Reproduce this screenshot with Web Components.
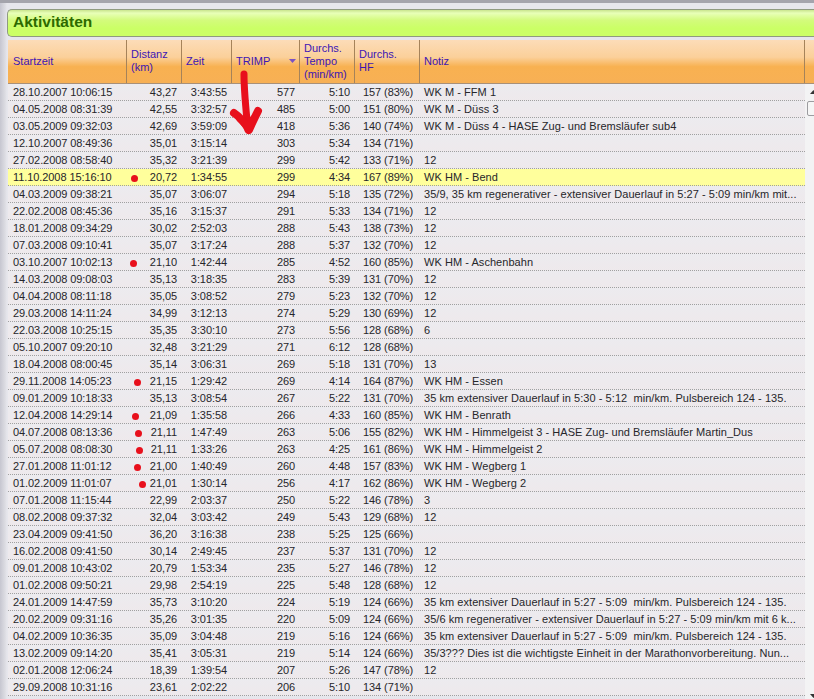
<!DOCTYPE html>
<html lang="de">
<head>
<meta charset="utf-8">
<title>Aktivitäten</title>
<style>
  html, body { margin: 0; height: 699px; overflow: hidden; background: #e6e6ec; }
  body { font-family: "Liberation Sans", Arial, sans-serif; }
</style>
</head>
<body>
<activity-page>
  <title-bar>Aktivitäten</title-bar>
  <activity-table></activity-table>
  <red-arrow></red-arrow>
</activity-page>

<script>
const COLUMNS = "119px 55px 50px 68px 55px 65px 385px 9px";

const ACTIVITIES = [
  ["28.10.2007 10:06:15", "43,27", "3:43:55", "577", "5:10", "157 (83%)", "WK M - FFM 1"],
  ["04.05.2008 08:31:39", "42,55", "3:32:57", "485", "5:00", "151 (80%)", "WK M - Düss 3"],
  ["03.05.2009 09:32:03", "42,69", "3:59:09", "418", "5:36", "140 (74%)", "WK M - Düss 4 - HASE Zug- und Bremsläufer sub4"],
  ["12.10.2007 08:49:36", "35,01", "3:15:14", "303", "5:34", "134 (71%)", ""],
  ["27.02.2008 08:58:40", "35,32", "3:21:39", "299", "5:42", "133 (71%)", "12"],
  ["11.10.2008 15:16:10", "20,72", "1:34:55", "299", "4:34", "167 (89%)", "WK HM - Bend", 131, true],
  ["04.03.2009 09:38:21", "35,07", "3:06:07", "294", "5:18", "135 (72%)", "35/9, 35 km regenerativer - extensiver Dauerlauf in 5:27 - 5:09 min/km mit..."],
  ["22.02.2008 08:45:36", "35,16", "3:15:37", "291", "5:33", "134 (71%)", "12"],
  ["18.01.2008 09:34:29", "30,02", "2:52:03", "288", "5:43", "138 (73%)", "12"],
  ["07.03.2008 09:10:41", "35,07", "3:17:24", "288", "5:37", "132 (70%)", "12"],
  ["03.10.2007 10:02:13", "21,10", "1:42:44", "285", "4:52", "160 (85%)", "WK HM - Aschenbahn", 130],
  ["14.03.2008 09:08:03", "35,13", "3:18:35", "283", "5:39", "131 (70%)", "12"],
  ["04.04.2008 08:11:18", "35,05", "3:08:52", "279", "5:23", "132 (70%)", "12"],
  ["29.03.2008 14:11:24", "34,99", "3:12:13", "274", "5:29", "130 (69%)", "12"],
  ["22.03.2008 10:25:15", "35,35", "3:30:10", "273", "5:56", "128 (68%)", "6"],
  ["05.10.2007 09:20:10", "32,48", "3:21:29", "271", "6:12", "128 (68%)", ""],
  ["18.04.2008 08:00:45", "35,14", "3:06:31", "269", "5:18", "131 (70%)", "13"],
  ["29.11.2008 14:05:23", "21,15", "1:29:42", "269", "4:14", "164 (87%)", "WK HM - Essen", 134],
  ["09.01.2009 10:18:33", "35,13", "3:08:54", "267", "5:22", "131 (70%)", "35 km extensiver Dauerlauf in 5:30 - 5:12  min/km. Pulsbereich 124 - 135."],
  ["12.04.2008 14:29:14", "21,09", "1:35:58", "266", "4:33", "160 (85%)", "WK HM - Benrath", 132],
  ["04.07.2008 08:13:36", "21,11", "1:47:49", "263", "5:06", "155 (82%)", "WK HM - Himmelgeist 3 - HASE Zug- und Bremsläufer Martin_Dus", 135],
  ["05.07.2008 08:08:30", "21,11", "1:33:26", "263", "4:25", "161 (86%)", "WK HM - Himmelgeist 2", 136],
  ["27.01.2008 11:01:12", "21,00", "1:40:49", "260", "4:48", "157 (83%)", "WK HM - Wegberg 1", 134],
  ["01.02.2009 11:01:07", "21,01", "1:30:14", "256", "4:17", "162 (86%)", "WK HM - Wegberg 2", 139],
  ["07.01.2008 11:15:44", "22,99", "2:03:37", "250", "5:22", "146 (78%)", "3"],
  ["08.02.2008 09:37:32", "32,04", "3:03:42", "249", "5:43", "129 (68%)", "12"],
  ["23.04.2009 09:41:50", "36,20", "3:16:38", "238", "5:25", "125 (66%)", ""],
  ["16.02.2008 09:41:50", "30,14", "2:49:45", "237", "5:37", "131 (70%)", "12"],
  ["09.01.2008 10:43:02", "20,79", "1:53:34", "235", "5:27", "146 (78%)", "12"],
  ["01.02.2008 09:50:21", "29,98", "2:54:19", "225", "5:48", "128 (68%)", "12"],
  ["24.01.2009 14:47:59", "35,73", "3:10:20", "224", "5:19", "124 (66%)", "35 km extensiver Dauerlauf in 5:27 - 5:09  min/km. Pulsbereich 124 - 135."],
  ["20.02.2009 09:31:16", "35,26", "3:01:35", "220", "5:09", "124 (66%)", "35/6 km regenerativer - extensiver Dauerlauf in 5:27 - 5:09 min/km mit 6 k..."],
  ["04.02.2009 10:36:35", "35,09", "3:04:48", "219", "5:16", "124 (66%)", "35 km extensiver Dauerlauf in 5:27 - 5:09  min/km. Pulsbereich 124 - 135."],
  ["13.02.2009 09:14:20", "35,41", "3:05:31", "219", "5:14", "124 (66%)", "35/3??? Dies ist die wichtigste Einheit in der Marathonvorbereitung. Nun..."],
  ["02.01.2008 12:06:24", "18,39", "1:39:54", "207", "5:26", "147 (78%)", "12"],
  ["29.09.2008 10:31:16", "23,61", "2:02:22", "206", "5:10", "134 (71%)", ""],
];

class ActivityPage extends HTMLElement {
  constructor() {
    super();
    this.attachShadow({ mode: "open" });
    this.shadowRoot.innerHTML = `
      <style>
        :host {
          display: block;
          position: relative;
          box-sizing: border-box;
          height: 699px;
          overflow: hidden;
          padding: 6px 0 0 7px;
          border-top: 3px solid #a4a4ac;
          background: linear-gradient(90deg, #c6c6d0 0, #dcdce2 5px, #e6e6ec 7px);
        }
      </style>
      <slot></slot>
    `;
  }
}

class TitleBar extends HTMLElement {
  constructor() {
    super();
    this.attachShadow({ mode: "open" });
    this.shadowRoot.innerHTML = `
      <style>
        :host {
          display: flex;
          align-items: center;
          box-sizing: border-box;
          height: 28px;
          padding: 0 0 2px 5px;
          margin-bottom: 3px;
          border: 1px solid #8f9a80;
          border-right: none;
          border-radius: 5px 0 0 5px;
          background: linear-gradient(#c9e58e 0, #e8ffb8 12%, #d3fb7c 40%, #cbff66 70%, #ccff66 100%);
          color: #2c6a00;
          font: bold 15.5px "Liberation Sans", Arial, sans-serif;
        }
      </style>
      <slot></slot>
    `;
  }
}

class TableHead extends HTMLElement {
  constructor() {
    super();
    this.attachShadow({ mode: "open" });
    this.shadowRoot.innerHTML = `
      <style>
        :host {
          display: grid;
          grid-template-columns: ${COLUMNS};
          height: 44px;
          margin-left: 1px;
          font: 11px/13px "Liberation Sans", Arial, sans-serif;
          color: #3d16b4;
          background: linear-gradient(#fcdcb8 0, #fbd09a 40%, #f8b151 62%, #f7b055 100%);
          border-bottom: 1px solid #a89078;
          box-sizing: border-box;
        }
        div {
          display: flex;
          align-items: center;
          padding: 0 0 1px 4px;
          border-right: 1px solid #a5835a;
          box-sizing: border-box;
          white-space: pre-line;
        }
        .first { padding-left: 5px; }
        .sort { justify-content: space-between; padding-right: 3px; }
        .end { border-right: none; }
        svg { display: block; }
      </style>
      <div class="first">Startzeit</div>
      <div>Distanz
(km)</div>
      <div>Zeit</div>
      <div class="sort">TRIMP<svg width="7" height="4" viewBox="0 0 7 4"><path d="M0 0h7L3.5 4z" fill="#7a52c4"/></svg></div>
      <div>Durchs.
Tempo
(min/km)</div>
      <div>Durchs.
HF</div>
      <div>Notiz</div>
      <div class="end"></div>
    `;
  }
}

class ActivityRow extends HTMLElement {
  set data(values) {
    const [start, dist, time, trimp, tempo, hf, note, dotX, active] = values;
    this.toggleAttribute("active", !!active);
    // dotX: page x of the red marker, the distance column begins at x=127
    const dot = dotX ? `<i style="left:${dotX - 127}px"></i>` : "";
    this.shadowRoot.innerHTML = `
      <style>
        :host {
          display: grid;
          grid-template-columns: ${COLUMNS};
          height: 17px;
          box-sizing: border-box;
          margin-left: 1px;
          font: 11px/17px "Liberation Sans", Arial, sans-serif;
          letter-spacing: -0.08px;
          color: #26262a;
          background: linear-gradient(#ecebef, #eee9ec);
          border-bottom: 1px dotted #a0a0a0;
        }
        :host([active]) { background: #ffff9c; }
        span { padding: 0 5px; white-space: pre; overflow: hidden; position: relative; }
        .start { padding-left: 5px; }
        .num { text-align: right; }
        .hf { padding: 0 0 0 8px; }
        .note { grid-column: 7 / 9; padding: 0 0 0 4px; letter-spacing: 0.05px; }
        i {
          position: absolute;
          top: 6px;
          width: 7px;
          height: 7px;
          border-radius: 50%;
          background: #e8101c;
        }
      </style>
      <span class="start">${start}</span>
      <span class="num">${dot}${dist}</span>
      <span class="num">${time}</span>
      <span class="num">${trimp}</span>
      <span class="num">${tempo}</span>
      <span class="hf">${hf}</span>
      <span class="note">${note}</span>
    `;
  }

  constructor() {
    super();
    this.attachShadow({ mode: "open" });
  }
}

class ScrollTrack extends HTMLElement {
  constructor() {
    super();
    this.attachShadow({ mode: "open" });
    this.shadowRoot.innerHTML = `
      <style>
        :host {
          display: flex;
          flex-direction: column;
          box-sizing: border-box;
          width: 9px;
          height: 100%;
          padding: 6px 0 0 2px;
          overflow: hidden;
          background: #f3f3f4;
        }
        .thumb {
          box-sizing: border-box;
          width: 12px;
          height: 15px;
          margin-top: 7px;
          flex: none;
          background: #f6f6f6;
          border: 1px solid #9c9ca0;
          border-radius: 2px;
        }
        .grow { flex: 1; }
        svg { display: block; flex: none; margin-left: 3px; }
      </style>
      <svg width="7" height="4" viewBox="0 0 7 4"><path d="M0 4L3.5 0L7 4z" fill="#333"/></svg>
      <div class="thumb"></div>
      <div class="grow"></div>
      <svg width="7" height="4" viewBox="0 0 7 4" style="margin-bottom:1px"><path d="M0 0L3.5 4L7 0z" fill="#333"/></svg>
    `;
  }
}

class ActivityTable extends HTMLElement {
  constructor() {
    super();
    this.attachShadow({ mode: "open" });
    this.shadowRoot.innerHTML = `
      <style>
        :host { display: block; }
        .body { display: flex; height: 615px; }
        .rows { flex: 1; min-width: 0; }
      </style>
      <table-head></table-head>
      <div class="body">
        <div class="rows"></div>
        <scroll-track></scroll-track>
      </div>
    `;
    const rows = this.shadowRoot.querySelector(".rows");
    ACTIVITIES.forEach((a) => {
      const row = document.createElement("activity-row");
      row.data = a;
      rows.appendChild(row);
    });
  }
}

class RedArrow extends HTMLElement {
  constructor() {
    super();
    this.attachShadow({ mode: "open" });
    this.shadowRoot.innerHTML = `
      <style>
        :host { position: absolute; left: 228px; top: 64px; width: 36px; height: 72px; }
        svg { display: block; }
      </style>
      <svg width="36" height="72" viewBox="0 0 36 72" fill="none" stroke="#e8101c" stroke-width="7" stroke-linecap="round" stroke-linejoin="round">
        <path d="M16 7C16 24 18 44 20 63"/>
        <path d="M6 46C12 50 17 56 21 63C24 56 27 50 30 44" stroke-width="8"/>
        <path d="M12 52L20 60L25 52" stroke-width="7"/>
      </svg>
    `;
  }
}

customElements.define("activity-page", ActivityPage);
customElements.define("title-bar", TitleBar);
customElements.define("table-head", TableHead);
customElements.define("activity-row", ActivityRow);
customElements.define("scroll-track", ScrollTrack);
customElements.define("activity-table", ActivityTable);
customElements.define("red-arrow", RedArrow);
</script>
</body>
</html>
